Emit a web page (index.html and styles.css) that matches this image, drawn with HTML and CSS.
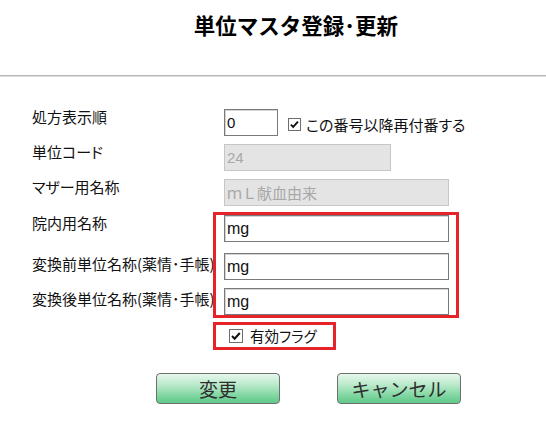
FILE: index.html
```html
<!DOCTYPE html>
<html lang="ja">
<head>
<meta charset="utf-8">
<title>単位マスタ登録・更新</title>
<link rel="stylesheet" href="styles.css">
</head>
<body>
<header class="header">
  <h1 class="title">単位マスタ登録･更新</h1>
</header>
<main class="form">
  <div class="row">
    <span class="label">処方表示順</span>
    <div class="field">
      <input class="text text-order" type="text" value="0">
      <span class="check check-renumber"><svg viewBox="0 0 13 13" width="11" height="11"><path d="M2.2 6.6 L5 9.4 L10.6 3.2" fill="none" stroke="#111" stroke-width="2.2"/></svg></span>
      <span class="check-text">この番号以降再付番する</span>
    </div>
  </div>
  <div class="row">
    <span class="label">単位コード</span>
    <div class="field"><input class="text text-code text-small" type="text" value="24" disabled></div>
  </div>
  <div class="row row-gap9">
    <span class="label">マザー用名称</span>
    <div class="field"><input class="text text-wide text-mid" type="text" value="ｍＬ献血由来" disabled></div>
  </div>
  <div class="row row-gap11">
    <span class="label">院内用名称</span>
    <div class="field"><input class="text text-wide" type="text" value="mg"></div>
  </div>
  <div class="row">
    <span class="label label-low">変換前単位名称(薬情･手帳)</span>
    <div class="field"><input class="text text-wide" type="text" value="mg"></div>
  </div>
  <div class="row">
    <span class="label label-low">変換後単位名称(薬情･手帳)</span>
    <div class="field"><input class="text text-wide" type="text" value="mg"></div>
  </div>
  <div class="flag-row">
    <span class="check check-flag"><svg viewBox="0 0 13 13" width="12" height="12"><path d="M2.2 6.6 L5 9.4 L10.6 3.2" fill="none" stroke="#111" stroke-width="2.2"/></svg></span>
    <span class="flag-text">有効フラグ</span>
  </div>
  <div class="buttons">
    <button class="btn" type="button">変更</button>
    <button class="btn" type="button">キャンセル</button>
  </div>
  <div class="mark mark-names"></div>
  <div class="mark mark-flag"></div>
</main>
</body>
</html>
```
FILE: styles.css
```css
html, body {
  margin: 0;
  padding: 0;
  background: #fff;
}
body {
  font-family: "Noto Sans CJK JP", "Liberation Sans", sans-serif;
  color: #111;
  width: 546px;
  height: 422px;
  overflow: hidden;
}
.header {
  height: 75px;
  border-bottom: 1px solid #b8b8b8;
  box-shadow: 0 1px 0 #dcdcdc;
}
.title {
  margin: 0;
  padding-top: 13px;
  padding-left: 46px;
  font-size: 21.5px;
  line-height: 24px;
  font-weight: bold;
  text-align: center;
  color: #000;
}
.form {
  position: relative;
  padding-top: 33px;
  padding-left: 32px;
}
.row {
  display: flex;
  align-items: flex-start;
  height: 27px;
  margin-bottom: 8px;
}
.row-gap9 { margin-bottom: 9px; }
.row-gap11 { margin-bottom: 11px; }
.label {
  width: 192px;
  flex: none;
  font-size: 15px;
  line-height: 16px;
  white-space: nowrap;
  font-feature-settings: "palt";
  color: #111;
}
.label-low { padding-top: 3px; }
.field {
  display: flex;
  align-items: center;
  height: 27px;
}
.text {
  box-sizing: border-box;
  height: 27px;
  margin: 0;
  padding: 0 2px;
  border: 1px solid #7a7a7a;
  box-shadow: inset 1px 1px 0 #d4d4d4;
  background: #fff;
  font-family: "Liberation Sans", sans-serif;
  font-size: 16px;
  color: #111;
  outline: none;
}
.text:disabled {
  background: #e4e4e4;
  border-color: #c6c6c6;
  box-shadow: none;
  color: #a8a8a8;
}
.text-order { width: 54px; font-size: 15px; }
.text-code { width: 167px; }
.text-small { font-size: 15px; }
.text-mid { font-size: 15px; font-family: "Liberation Sans", "Noto Sans CJK JP", sans-serif; }
.text-wide { width: 225px; }
.check {
  box-sizing: border-box;
  display: flex;
  align-items: center;
  justify-content: center;
  width: 13px;
  height: 13px;
  border: 1px solid #6e6e6e;
  background: #fff;
  flex: none;
}
.check-renumber {
  margin-left: 10px;
  margin-top: 4px;
}
.check-text {
  margin-left: 5px;
  margin-top: 4px;
  font-size: 15px;
  line-height: 16px;
  font-feature-settings: "palt";
  white-space: nowrap;
}
.flag-row {
  display: flex;
  align-items: center;
  height: 18px;
  margin-top: 12px;
  padding-left: 197px;
}
.check-flag {
  width: 14px;
  height: 14px;
}
.flag-text {
  margin-left: 7px;
  font-size: 14.5px;
  line-height: 16px;
  font-feature-settings: "palt";
}
.buttons {
  display: flex;
  gap: 57px;
  margin-top: 28px;
  padding-left: 124px;
}
.btn {
  box-sizing: border-box;
  width: 124px;
  height: 31px;
  margin: 0;
  padding: 0;
  border: 1px solid #6f6f6f;
  border-radius: 4px;
  background: linear-gradient(to bottom, #e6f7ec 0%, #b6e8c8 40%, #7fd6a0 75%, #5fc98a 100%);
  font-family: "Noto Sans CJK JP", sans-serif;
  font-size: 19px;
  line-height: 27px;
  color: #2e2e2e;
}
.mark {
  position: absolute;
  box-sizing: border-box;
  border: 3px solid #e52329;
}
.mark-names {
  top: 136px;
  left: 213px;
  width: 246px;
  height: 106px;
}
.mark-flag {
  top: 246px;
  left: 213px;
  width: 123px;
  height: 28px;
}
```
